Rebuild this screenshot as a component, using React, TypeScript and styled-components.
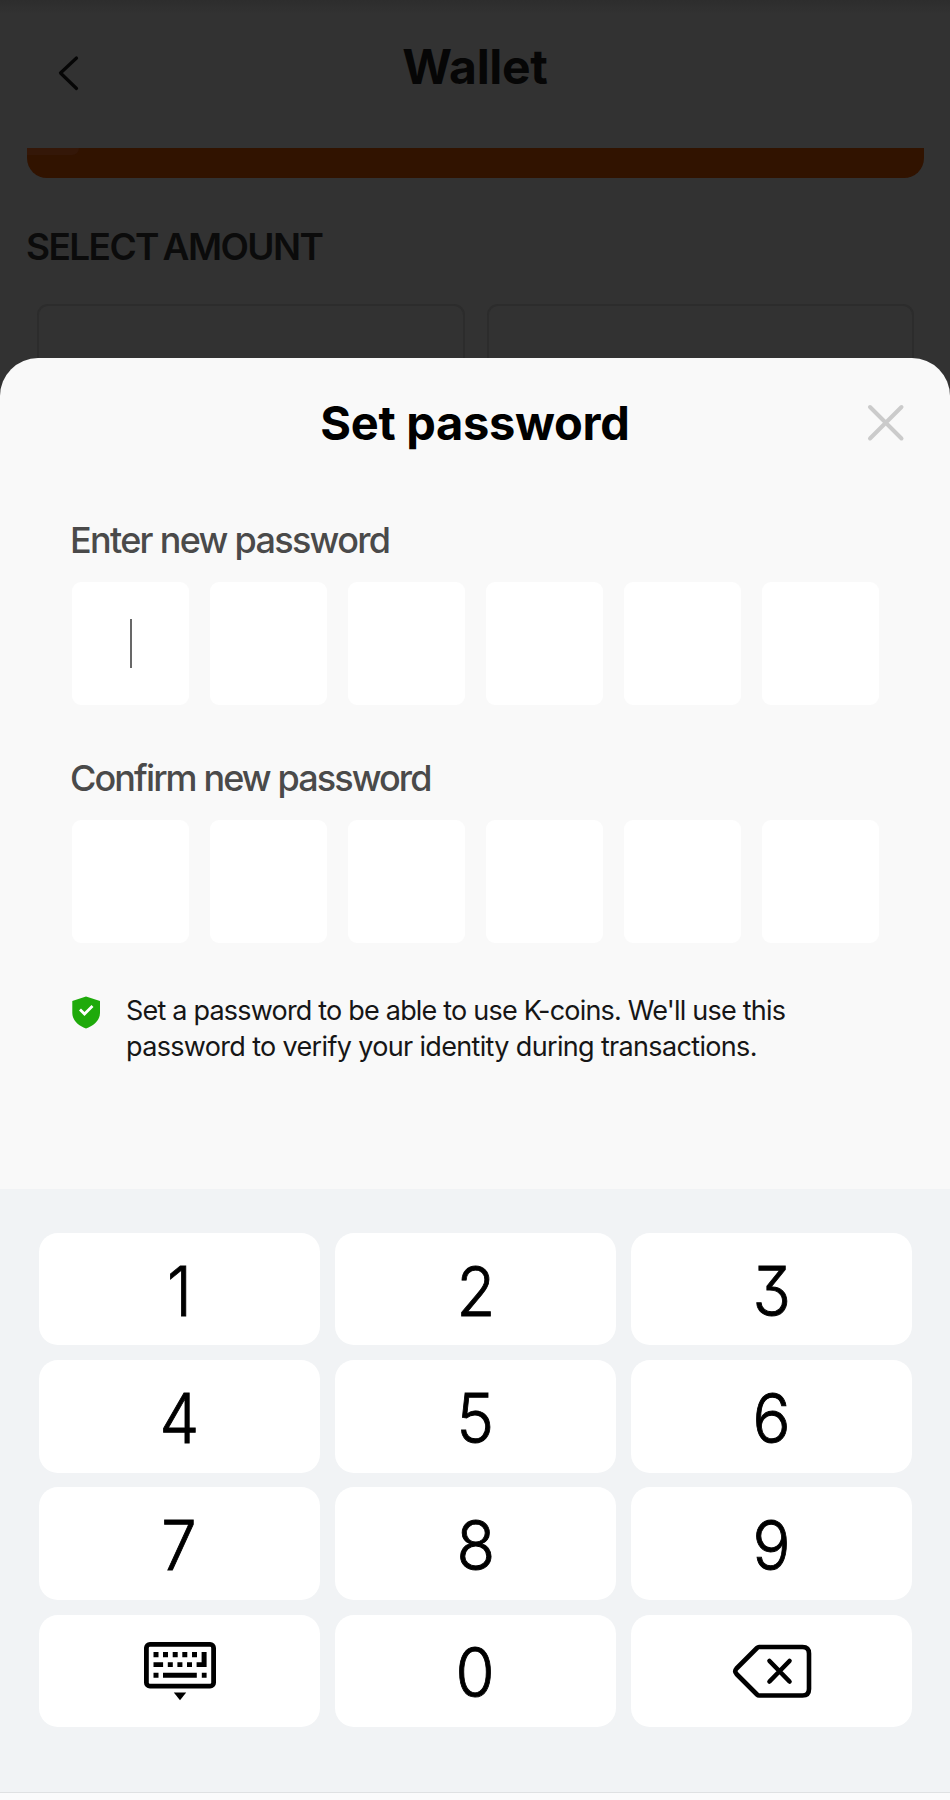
import React from "react";
import styled, { createGlobalStyle } from "styled-components";

const GlobalStyle = createGlobalStyle`
  * { box-sizing: border-box; }
  body { margin: 0; background: #f1f3f5; }
  button { border: 0; padding: 0; margin: 0; font: inherit; color: inherit; background: none; }
`;

const Screen = styled.div`
  display: flex;
  flex-direction: column;
  width: 950px;
  height: 1800px;
  overflow: hidden;
  font-family: Inter, "Liberation Sans", sans-serif;
  background: linear-gradient(#2d2d2d, #323232 14px, #323232);
`;

const Wallet = styled.section`
  height: 358px;
  flex: none;
`;

const Header = styled.header`
  height: 148px;
  display: grid;
  grid-template-columns: 150px 1fr 150px;
`;

const BackButton = styled.button`
  display: block;
  padding: 54px 0 0 56px;
  width: 100px;
  height: 94px;
  svg { display: block; }
`;

const HeaderTitle = styled.h1`
  margin: 0;
  padding-top: 36px;
  text-align: center;
  font-size: 48px;
  line-height: 62px;
  font-weight: 700;
  letter-spacing: -0.3px;
  color: #060606;
`;

const Banner = styled.div`
  height: 30px;
  margin: 0 26px 0 27px;
  border-radius: 0 0 20px 20px;
  background: #311300;
  overflow: hidden;
`;

const BannerGlow = styled.div`
  width: 52px;
  height: 7px;
  border-radius: 0 0 14px 0;
  background: #341708;
`;

const SectionTitle = styled.h2`
  margin: 46px 0 0 26px;
  font-size: 37px;
  line-height: 46px;
  font-weight: 600;
  letter-spacing: -1.6px;
  word-spacing: -3px;
  color: #0b0b0b;
`;

const Amounts = styled.div`
  display: grid;
  grid-template-columns: 1fr 1fr;
  gap: 22px;
  margin: 34px 36px 0 37px;
`;

const AmountCard = styled.div`
  height: 90px;
  border: 2px solid #2c2c2c;
  border-radius: 11px;
`;

const Sheet = styled.main`
  position: relative;
  flex: none;
  height: 831px;
  border-radius: 38px 38px 0 0;
  background: #f9f9f9;
`;

const SheetHeader = styled.div`
  display: grid;
  grid-template-columns: 110px 1fr 110px;
  height: 161px;
`;

const SheetTitle = styled.h2`
  grid-column: 2;
  margin: 0;
  padding-top: 35px;
  text-align: center;
  font-size: 47px;
  line-height: 60px;
  font-weight: 700;
  letter-spacing: -0.3px;
  color: #000;
`;

const CloseButton = styled.button`
  display: flex;
  align-items: flex-start;
  height: 100px;
  padding: 46px 0 0 27px;
`;

const Field = styled.div`
  height: 238px;
  padding: 0 71px 0 72px;
`;

const Label = styled.label<{ $spacing: number }>`
  display: block;
  height: 63px;
  margin-left: -2px;
  font-size: 36px;
  line-height: 42px;
  font-weight: 500;
  letter-spacing: ${(p) => p.$spacing}px;
  color: #4a4a4a;
`;

const Cells = styled.div`
  display: grid;
  grid-template-columns: repeat(6, 117px);
  justify-content: space-between;
`;

const Cell = styled.div`
  display: flex;
  align-items: center;
  justify-content: center;
  height: 123px;
  border-radius: 9px;
  background: #fff;
`;

const Caret = styled.span`
  width: 2px;
  height: 49px;
  background: #686868;
`;

const Notice = styled.div`
  display: flex;
  gap: 25px;
  padding: 0 72px;
  svg { flex: none; margin-top: 1px; }
`;

const NoticeText = styled.div`
  margin-top: -2px;
  font-size: 27px;
  line-height: 36px;
  font-weight: 400;
  color: #161616;
  white-space: nowrap;
`;

const NoticeLine = styled.p<{ $spacing: number }>`
  margin: 0;
  letter-spacing: ${(p) => p.$spacing}px;
`;

const Keypad = styled.div`
  flex: none;
  display: grid;
  grid-template-columns: repeat(3, 281px);
  grid-auto-rows: 112.4px;
  column-gap: 15px;
  row-gap: 14.8px;
  height: 603px;
  padding: 44px 39px 0;
  background: #f1f3f5;
`;

const Key = styled.button`
  display: flex;
  align-items: center;
  justify-content: center;
  border-radius: 19px;
  background: #fff;
`;

const Digit = styled.span`
  padding-top: 3px;
  font-size: 68px;
  line-height: 80px;
  font-weight: 300;
  color: #000;
  -webkit-text-stroke: 0.9px #000;
  font-feature-settings: "cv09" 1;
  transform: scaleX(0.93);
`;

const BottomBar = styled.footer`
  flex: none;
  height: 8px;
  border-top: 1px solid #dfe1e3;
  background: #fbfbfc;
`;

const BackIcon = () => (
  <svg width="26" height="40" viewBox="0 0 26 40" fill="none" stroke="#060606" strokeWidth="3.2" strokeLinecap="round" strokeLinejoin="round">
    <path d="M20.5 4L4.5 19L20.5 34.5" />
  </svg>
);

const CloseIcon = () => (
  <svg width="38" height="38" viewBox="0 0 38 38" stroke="#cbcbcb" strokeWidth="4" strokeLinecap="round">
    <path d="M3 3L34.5 34.5M34.5 3L3 34.5" />
  </svg>
);

const ShieldIcon = () => (
  <svg width="29" height="33" viewBox="0 0 29 33">
    <path d="M14 0.5L28 5V17C28 24 22 29.5 14 32.5C6 29.5 0.3 24 0.3 17V5Z" fill="#1faa0b" />
    <path d="M8 13.5L12.5 18L20.5 10" fill="none" stroke="#fff" strokeWidth="2.8" />
  </svg>
);

const KeyboardIcon = () => (
  <svg width="74" height="60" viewBox="0 0 74 60">
    <rect x="3.4" y="3.4" width="67.2" height="41.8" rx="3.5" fill="none" stroke="#000" strokeWidth="4.8" />
    <path d="M10.5 11h5v5.2h-5zM20 11h5v5.2h-5zM29.7 11h5v5.2h-5zM39.3 11h5v5.2h-5zM49 11h5v5.2h-5zM58.6 11h5v15h-10v-4.7h5zM10.5 21.3h9.6v4.7h-9.6zM24.8 21.3h5v4.7h-5zM34.4 21.3h5v4.7h-5zM44 21.3h5v4.7h-5zM10.5 31.8h5v5h-5zM20 31.8h33.8v5H20zM58.8 31.8h4.8v5h-4.8z" />
    <path d="M30.8 51.5h12.4L37 59.3z" />
  </svg>
);

const BackspaceIcon = () => (
  <svg width="80" height="56" viewBox="0 0 80 56" fill="none" stroke="#000" strokeLinecap="round" strokeLinejoin="round">
    <path d="M27 4H70.5Q77 4 77 10.5V46Q77 52.5 70.5 52.5H27Q26 52.5 25 51.5L4.5 31Q2 28.3 4.5 25.5L25 5Q26 4 27 4Z" strokeWidth="4.6" />
    <path d="M37.5 18L57.5 38.5M57.5 18L37.5 38.5" strokeWidth="4.6" />
  </svg>
);

const CELLS = [0, 1, 2, 3, 4, 5];

export default function App() {
  return (
    <Screen>
      <GlobalStyle />
      <Wallet>
        <Header>
          <BackButton aria-label="Back"><BackIcon /></BackButton>
          <HeaderTitle>Wallet</HeaderTitle>
        </Header>
        <Banner><BannerGlow /></Banner>
        <SectionTitle>SELECT AMOUNT</SectionTitle>
        <Amounts>
          <AmountCard />
          <AmountCard />
        </Amounts>
      </Wallet>
      <Sheet>
        <SheetHeader>
          <SheetTitle>Set password</SheetTitle>
          <CloseButton aria-label="Close"><CloseIcon /></CloseButton>
        </SheetHeader>
        <Field>
          <Label $spacing={-1.7}>Enter new password</Label>
          <Cells>
            {CELLS.map((i) => <Cell key={i}>{i === 0 && <Caret />}</Cell>)}
          </Cells>
        </Field>
        <Field>
          <Label $spacing={-1.9}>Confirm new password</Label>
          <Cells>
            {CELLS.map((i) => <Cell key={i} />)}
          </Cells>
        </Field>
        <Notice>
          <ShieldIcon />
          <NoticeText>
            <NoticeLine $spacing={-0.8}>Set a password to be able to use K-coins. We'll use this</NoticeLine>
            <NoticeLine $spacing={-0.66}>password to verify your identity during transactions.</NoticeLine>
          </NoticeText>
        </Notice>
      </Sheet>
      <Keypad>
        {["1", "2", "3", "4", "5", "6", "7", "8", "9"].map((d) => (
          <Key key={d}><Digit>{d}</Digit></Key>
        ))}
        <Key aria-label="Hide keyboard"><KeyboardIcon /></Key>
        <Key><Digit>0</Digit></Key>
        <Key aria-label="Delete"><BackspaceIcon /></Key>
      </Keypad>
      <BottomBar />
    </Screen>
  );
}
